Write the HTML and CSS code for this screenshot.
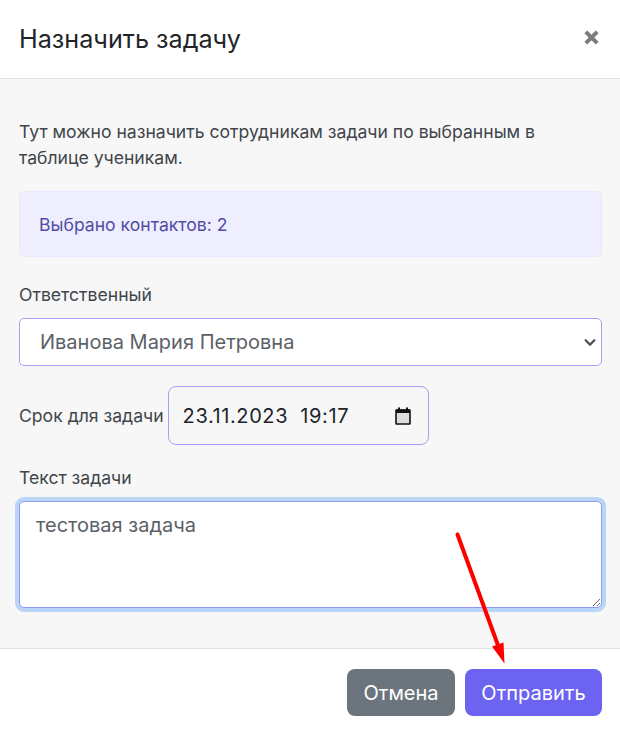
FILE: index.html
```html
<!DOCTYPE html>
<html lang="ru">
  <head>
    <meta charset="UTF-8" />
    <meta name="viewport" content="width=device-width, initial-scale=1.0" />
    <title>Назначить задачу</title>
    <link rel="stylesheet" href="styles.css">
  </head>
  <body>
    <main class="modal">
      <header class="modal__header">
        <h2 class="modal__title">Назначить задачу</h2>
        <button class="modal__close" aria-label="Закрыть">
          <svg width="15" height="15" viewBox="0 0 15 15"><path d="M1.800 1.800l11.400 11.400M13.200 1.800l-11.400 11.400" /></svg>
        </button>
      </header>

      <div class="modal__body">
        <p class="modal__intro">Тут можно назначить сотрудникам задачи по выбранным в таблице ученикам.</p>
        <div class="alert">Выбрано контактов: 2</div>

        <label class="field-label" for="owner">Ответственный</label>
        <select class="select" id="owner">
          <option>Иванова Мария Петровна</option>
        </select>

        <div class="deadline">
          <label class="deadline__label" for="due">Срок для задачи</label>
          <div class="date-input" id="due">
            <span>23.11.2023 19:17</span>
            <svg width="16" height="18" viewBox="0 0 16 18">
              <path class="date-input__fill" d="M1 5h14v11.5H1z" />
              <path class="date-input__line" d="M1.500 3h13a.5.5 0 0 1 .5.5v13a.5.5 0 0 1-.5.5h-13a.5.5 0 0 1-.5-.5v-13a.5.5 0 0 1 .5-.5z" />
              <path class="date-input__solid" d="M1 2.500h14V6H1zM3 .5h2V3H3zM11 .5h2V3h-2z" />
            </svg>
          </div>
        </div>

        <label class="field-label field-label--task" for="task">Текст задачи</label>
        <textarea class="textarea" id="task">тестовая задача</textarea>
      </div>

      <footer class="modal__footer">
        <button class="btn btn--cancel">Отмена</button>
        <button class="btn btn--send">Отправить</button>
      </footer>

      <!-- red annotation arrow drawn over the screenshot -->
      <svg class="arrow" width="60" height="140" viewBox="0 0 60 140">
        <path class="arrow__line" d="M5.500 4.500L47 118" />
        <path class="arrow__head" d="M52.500 133.500L40 116.500L51.500 112.500z" />
      </svg>
    </main>
  </body>
</html>
```

FILE: styles.css
```css
* {
  margin: 0;
  padding: 0;
  box-sizing: border-box;
}

body {
  font-family: Inter, "Noto Sans", sans-serif;
  font-size: 17.6px;
  color: #40454b;
  background-color: #fff;
}

.modal {
  position: relative;
  display: flex;
  flex-direction: column;
  width: 620px;
  height: 735px;
  overflow: hidden;
  background-color: #fff;
}

.modal__header {
  display: flex;
  align-items: center;
  justify-content: space-between;
  height: 79px;
  padding: 0 19px;
  border-bottom: 1px solid #dfe0e6;
}

.modal__title {
  font-size: 25.2px;
  font-weight: 400;
  color: #212529;
}

.modal__close {
  display: flex;
  border: none;
  background: none;
  margin-right: 2px;
  margin-bottom: 3px;
}

.modal__close path {
  fill: none;
  stroke: #7c7c7c;
  stroke-width: 4;
}

.modal__body {
  height: 569px;
  padding: 40px 18px 0 19px;
  background-color: #f7f7f7;
}

.modal__intro {
  line-height: 26px;
  margin-bottom: 20px;
}

.alert {
  display: flex;
  align-items: center;
  height: 66px;
  padding: 0 19px;
  margin-bottom: 26px;
  color: #524da3;
  background-color: #eeeefe;
  border: 1px solid #e8e8fd;
  border-radius: 5px;
}

.field-label {
  display: block;
  line-height: 24px;
  margin-bottom: 11px;
}

.select {
  display: block;
  width: 100%;
  height: 48px;
  padding: 0 20px;
  font-family: inherit;
  font-size: 20px;
  color: #5b6168;
  background-color: #fff;
  background-image: url("data:image/svg+xml,%3csvg xmlns='http://www.w3.org/2000/svg' viewBox='0 0 16 16'%3e%3cpath fill='none' stroke='%23495057' stroke-linecap='round' stroke-linejoin='round' stroke-width='2.5' d='M3 6l5 5 5-5'/%3e%3c/svg%3e");
  background-repeat: no-repeat;
  background-position: right 4px center;
  background-size: 14px 14px;
  border: 1px solid #a5a0fb;
  border-radius: 5px;
  appearance: none;
}

.deadline {
  display: flex;
  align-items: center;
  gap: 4px;
  margin-top: 20px;
}

.date-input {
  display: flex;
  align-items: center;
  justify-content: space-between;
  width: 261px;
  height: 59px;
  padding: 0 17px 0 14px;
  font-size: 20px;
  letter-spacing: 0.6px;
  word-spacing: 6px;
  color: #212529;
  border: 1px solid #a5a0fb;
  border-radius: 8px;
}

.date-input__fill {
  fill: #dcdcdc;
}

.date-input__line {
  fill: none;
  stroke: #111;
  stroke-width: 1.6;
}

.date-input__solid {
  fill: #111;
}

.field-label--task {
  margin-top: 21px;
  margin-bottom: 11px;
}

.textarea {
  display: block;
  width: 100%;
  height: 107px;
  padding: 8px 16px;
  font-family: inherit;
  font-size: 20px;
  line-height: 30px;
  color: #5b6168;
  background-color: #fff;
  border: 1px solid #8e9bf0;
  border-radius: 5px;
  box-shadow: 0 0 0 4px #b9d6f8;
  outline: none;
}

.modal__footer {
  display: flex;
  justify-content: flex-end;
  gap: 10px;
  padding: 20px 18px 0 0;
  flex: 1;
  border-top: 1px solid #dfe0e6;
}

.btn {
  height: 47px;
  font-family: inherit;
  font-size: 20px;
  color: #fff;
  border: none;
  border-radius: 8px;
}

.btn--cancel {
  width: 108px;
  background-color: #6c757d;
}

.btn--send {
  width: 137px;
  background-color: #6c63f0;
}

.arrow {
  position: absolute;
  left: 452px;
  top: 530px;
}

.arrow__line {
  fill: none;
  stroke: #ff0000;
  stroke-width: 4;
  stroke-linecap: round;
}

.arrow__head {
  fill: #ff0000;
}
```
